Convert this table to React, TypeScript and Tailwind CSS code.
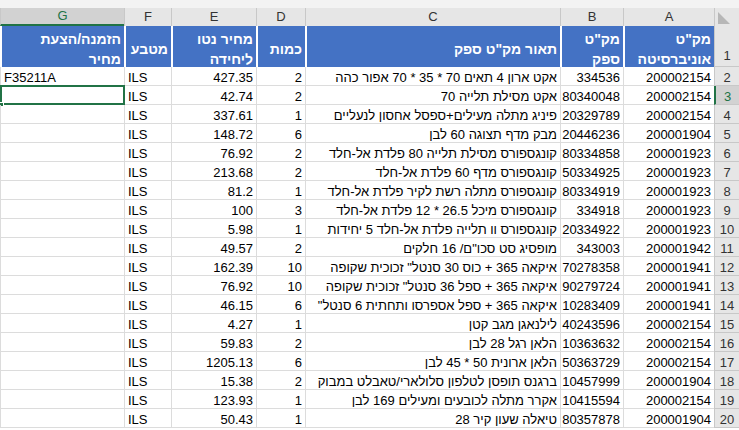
import React from "react";

type Row = [string, string, string, string, string, string, string];

const rows: Row[] = [
  ["200002154", "334536", "אקט ארון 4 תאים 70 * 35 * 70 אפור כהה", "2", "427.35", "ILS", "F35211A"],
  ["200002154", "80340048", "אקט מסילת תלייה 70", "2", "42.74", "ILS", ""],
  ["200002154", "20329789", "פיניג מתלה מעילים+ספסל אחסון לנעליים", "1", "337.61", "ILS", ""],
  ["200001904", "20446236", "מבק מדף תצוגה 60 לבן", "6", "148.72", "ILS", ""],
  ["200001923", "80334858", "קונגספורס מסילת תלייה 80 פלדת אל-חלד", "2", "76.92", "ILS", ""],
  ["200001923", "50334925", "קונגספורס מדף 60 פלדת אל-חלד", "2", "213.68", "ILS", ""],
  ["200001923", "80334919", "קונגספורס מתלה רשת לקיר פלדת אל-חלד", "1", "81.2", "ILS", ""],
  ["200001923", "334918", "קונגספורס מיכל 26.5 * 12 פלדת אל-חלד", "3", "100", "ILS", ""],
  ["200001923", "20334922", "קונגספורס וו תלייה פלדת אל-חלד 5 יחידות", "1", "5.98", "ILS", ""],
  ["200001942", "343003", "מופסיג סט סכו\"ם/ 16 חלקים", "2", "49.57", "ILS", ""],
  ["200001941", "70278358", "איקאה 365 + כוס 30 סנטל\" זכוכית שקופה", "10", "162.39", "ILS", ""],
  ["200001941", "90279724", "איקאה 365 + ספל 36 סנטל\" זכוכית שקופה", "10", "76.92", "ILS", ""],
  ["200001941", "10283409", "איקאה 365 + ספל אספרסו ותחתית 6 סנטל\"", "6", "46.15", "ILS", ""],
  ["200002154", "40243596", "לילנאגן מגב קטן", "1", "4.27", "ILS", ""],
  ["200002154", "10363632", "הלאן רגל 28 לבן", "2", "59.83", "ILS", ""],
  ["200002154", "50363729", "הלאן ארונית 50 * 45 לבן", "6", "1205.13", "ILS", ""],
  ["200001904", "10457999", "ברגנס תופסן לטלפון סלולארי/טאבלט במבוק", "2", "15.38", "ILS", ""],
  ["200002154", "10415594", "אקרר מתלה לכובעים ומעילים 169 לבן", "1", "123.93", "ILS", ""],
  ["200001904", "80357878", "טיאלה שעון קיר 28", "1", "50.43", "ILS", ""],
];

const W = ["w-[91px]", "w-[63px]", "w-[255px]", "w-[49px]", "w-[85px]", "w-[47px]", "w-[124px]"];
const letters = ["A", "B", "C", "D", "E", "F", "G"];

function HeaderCell({ w, children, selected }: { w: string; children: React.ReactNode; selected?: boolean }) {
  return (
    <div
      className={`${w} shrink-0 h-[18px] flex items-center justify-center border-l border-[#c8c8c8] text-[13px] ${
        selected ? "bg-[#d2d2d2] text-[#217346] border-b-2 border-b-[#217346]" : "bg-[#e6e6e6] text-[#333]"
      }`}
    >
      {children}
    </div>
  );
}

export default function App() {
  return (
    <div
      dir="rtl"
      className="w-[739px] h-[430px] overflow-hidden bg-white font-['Liberation_Sans','DejaVu_Sans',sans-serif] text-black"
    >
      {/* top strip */}
      <div className="h-[8px] bg-[#f3f3f3]" />
      {/* column letters */}
      <div className="flex">
        <div className="w-[25px] shrink-0 h-[18px] bg-[#e6e6e6] border-l border-[#c8c8c8] relative">
          <svg width="14" height="14" viewBox="0 0 14 14" className="absolute right-[8px] bottom-[1px]">
            <polygon points="1,1 1,13 13,13" fill="#b7b7b7" />
          </svg>
        </div>
        {letters.map((l, i) => (
          <HeaderCell key={l} w={W[i]} selected={l === "G"}>
            {l}
          </HeaderCell>
        ))}
      </div>
      {/* row 1 header */}
      <div className="flex h-[41px]">
        <div className="w-[25px] shrink-0 bg-[#e6e6e6] border-l border-b border-[#c8c8c8] text-[#333] text-[13px] flex items-end justify-center pb-[1px]">
          1
        </div>
        {[
          ["מק\"ט", "אוניברסיטה"],
          ["מק\"ט", "ספק"],
          ["תאור מק\"ט ספק"],
          ["כמות"],
          ["מחיר נטו", "ליחידה"],
          ["מטבע"],
          ["הזמנה/הצעת", "מחיר"],
        ].map((lines, i) => (
          <div
            key={i}
            className={`${W[i]} shrink-0 bg-[#4472c4] border-l-2 border-white text-white font-bold text-[14px] leading-[20px] flex flex-col justify-center pt-[5px] pr-[3px] text-right`}
          >
            {lines.map((t, j) => (
              <div key={j} className="whitespace-nowrap">
                {t}
              </div>
            ))}
          </div>
        ))}
      </div>
      {/* data rows */}
      {rows.map((r, ri) => {
        const n = ri + 2;
        const sel = n === 3;
        return (
          <div key={n} className="flex h-[19px]">
            <div
              className={`w-[25px] shrink-0 border-b border-[#c8c8c8] text-[13px] leading-[15px] flex items-end justify-center ${
                sel ? "bg-[#d2d2d2] text-[#217346] border-l-2 border-l-[#217346]" : "bg-[#e6e6e6] text-[#333] border-l"
              }`}
            >
              {n}
            </div>
            {r.map((v, ci) => {
              const ltr = ci === 5 || ci === 6;
              return (
                <div
                  key={ci}
                  className={`${W[ci]} shrink-0 relative border-l border-b border-[#dcdcdc] text-[13px] leading-[15px] flex items-end overflow-visible whitespace-nowrap ${
                    ltr ? "justify-end pl-[3px]" : "justify-start pr-[3px]"
                  }`}
                >
                  <span dir={ltr ? "ltr" : "rtl"}>{v}</span>
                  {sel && ci === 6 && (
                    <>
                      <div className="absolute left-[-1px] right-[-1px] top-[-1px] bottom-[-1px] border-2 border-[#217346]" />
                      <div className="absolute left-[-2px] bottom-[-3px] w-[5px] h-[5px] bg-[#217346] border border-white" />
                    </>
                  )}
                </div>
              );
            })}
          </div>
        );
      })}
    </div>
  );
}
